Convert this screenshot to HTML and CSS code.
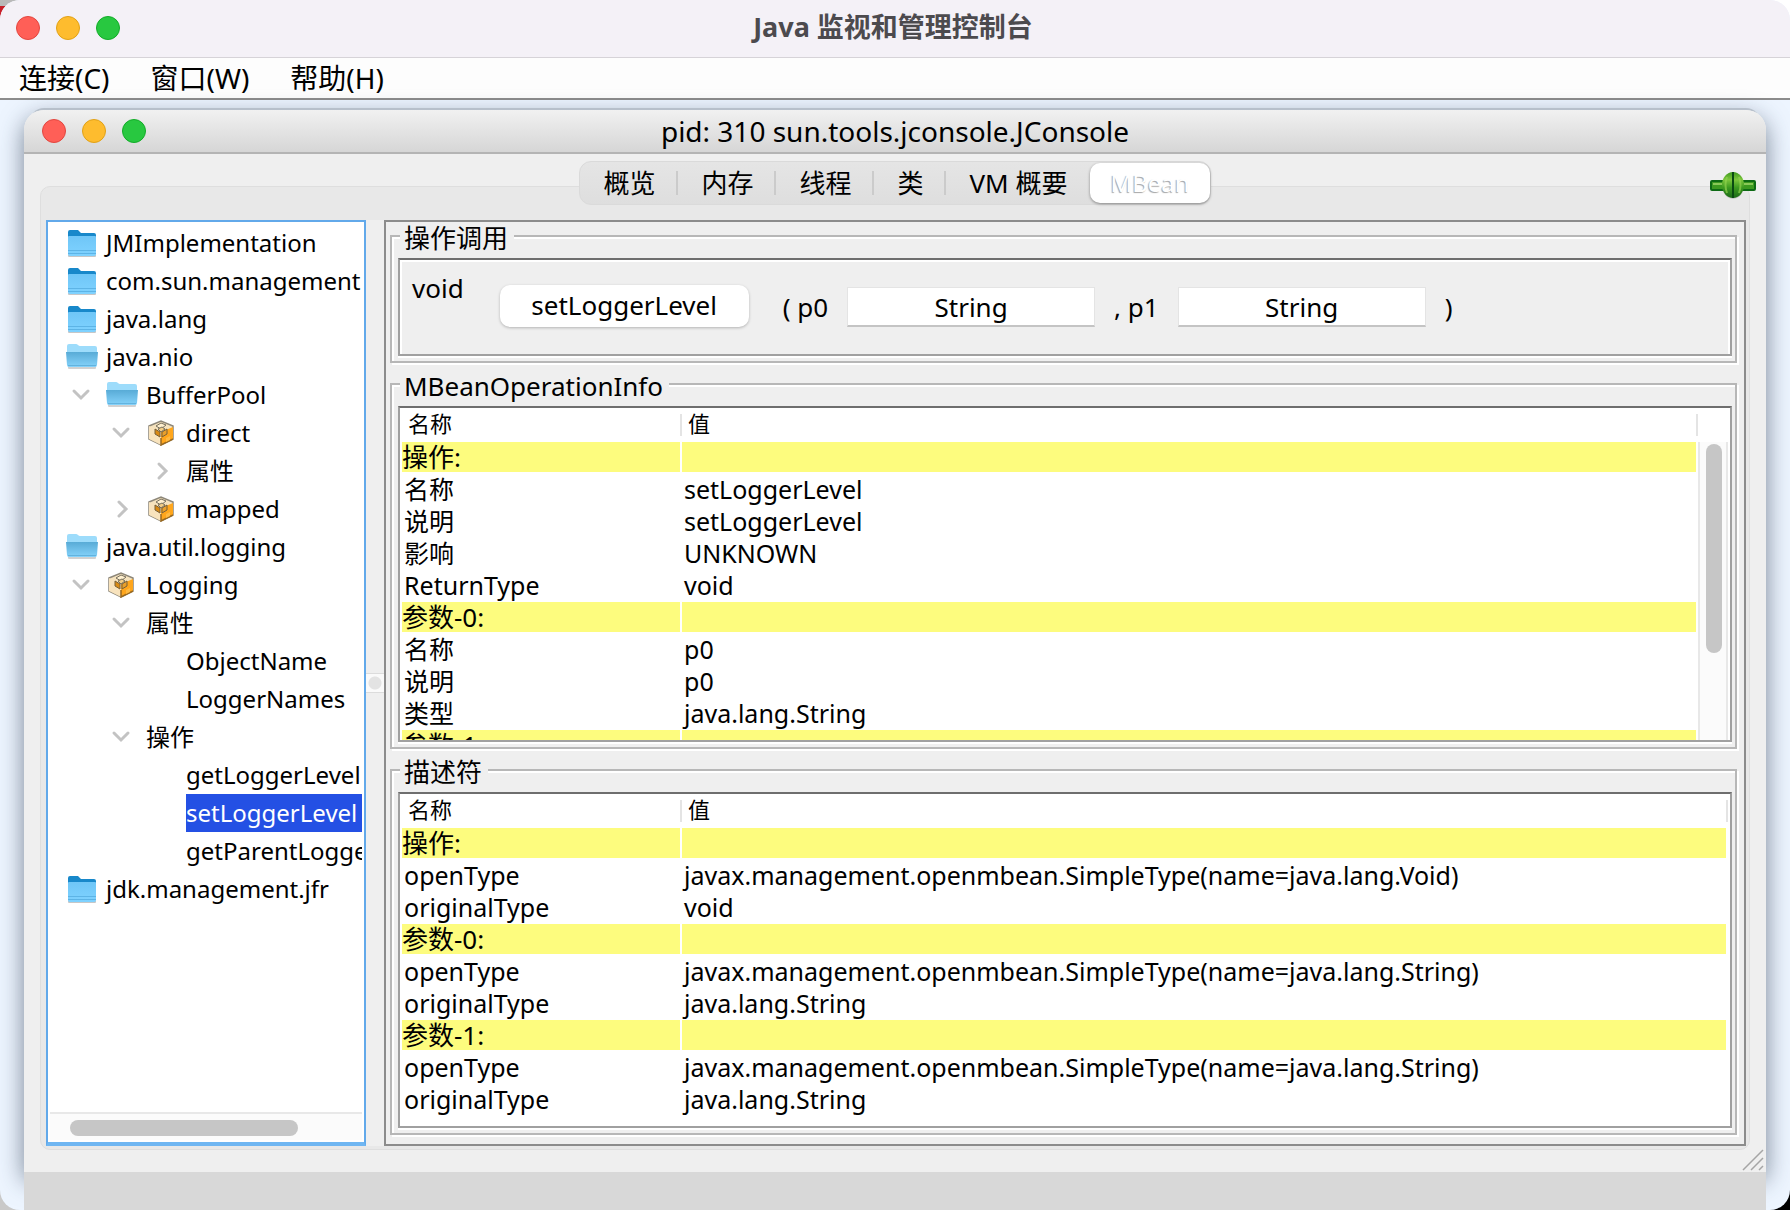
FILE: index.html
```html
<!DOCTYPE html>
<html lang="zh-CN">
<head>
    <meta charset="UTF-8">
    <meta name="viewport" content="width=device-width, initial-scale=1.0">
    <link rel="stylesheet" href="styles.css">
    <title>Java 监视和管理控制台</title>
</head>
<body>

<svg class="icon-defs" aria-hidden="true">
    <defs>
        <linearGradient id="closedFill" x1="0" y1="0" x2="0" y2="1">
            <stop offset="0" stop-color="#6fc6f7"/>
            <stop offset="1" stop-color="#7fd2ff"/>
        </linearGradient>
        <linearGradient id="openFill" x1="0" y1="0" x2="0" y2="1">
            <stop offset="0" stop-color="#58abd6"/>
            <stop offset="1" stop-color="#86d3fb"/>
        </linearGradient>
        <linearGradient id="plugFill" x1="0" y1="0" x2="0" y2="1">
            <stop offset="0" stop-color="#3f9a1e"/>
            <stop offset="0.3" stop-color="#7cc63c"/>
            <stop offset="0.6" stop-color="#3c9a20"/>
            <stop offset="1" stop-color="#1c6a18"/>
        </linearGradient>
    </defs>
    <symbol id="folder" viewBox="0 0 32 32">
        <rect x="2" y="27" width="28" height="3" rx="1" fill="#000" opacity="0.22"/>
        <path d="M2 5q0-2 2-2h8l3 3h13q2 0 2 2v5H2z" fill="#1888ca"/>
        <path d="M2 10q0-1 1-1h26q1 0 1 1v17q0 2-2 2H4q-2 0-2-2z" fill="url(#closedFill)"/>
        <path d="M2 23.500h28M2 26.500h28" stroke="#5db4e6" stroke-width="1"/>
    </symbol>
    <symbol id="folder-open" viewBox="0 0 32 32">
        <rect x="2" y="25" width="28" height="3" rx="1" fill="#000" opacity="0.18"/>
        <path d="M1 5q0-2 2-2h7q1 0 2 1t2 1h15q2 0 2 2v6H1z" fill="#9ddcfb"/>
        <path d="M0 11h32l-1 13q0 2-2 2H3q-2 0-2-2z" fill="url(#openFill)"/>
        <path d="M2 24.500h28" stroke="#63b3de" stroke-width="1"/>
    </symbol>
    <symbol id="mbean" viewBox="0 0 26 26">
        <path d="M1 6l12-5 12 5v13l-12 6-12-6z" fill="#f5e2bd" stroke="#8d8779" stroke-width="1.500"/>
        <path d="M13 12l12-5v12l-12 6z" fill="#ffa61c"/>
        <path d="M1 6l12 6v13L1 19z" fill="#f8e3bd"/>
        <path d="M13 18v7l12-6" stroke="#9a6a20" stroke-width="1.500" fill="none"/>
        <path d="M8 6l5-3 5 2-5 4z" fill="#fff0cf" stroke="#77705f" stroke-width="1"/>
        <path d="M7 9l5 3v5l-5-3z" fill="#d98a14" stroke="#77603a" stroke-width="1"/>
        <path d="M14 12l5-3v5l-5 3z" fill="#e9a02c" stroke="#77603a" stroke-width="1"/>
        <path d="M10 9l4-2 3 2-4 3z" fill="#f2cd86" stroke="#77705f" stroke-width="1"/>
        <path d="M18 18l4-2v4l-4 2z" fill="#ffb941"/>
    </symbol>
    <symbol id="chevron-down" viewBox="0 0 20 20">
        <path d="M3 6l7 7 7-7" fill="none" stroke="#c3c3c3" stroke-width="3" stroke-linecap="round"/>
    </symbol>
    <symbol id="chevron-right" viewBox="0 0 20 20">
        <path d="M8 3l7 7-7 7" fill="none" stroke="#c3c3c3" stroke-width="3" stroke-linecap="round"/>
    </symbol>
</svg>

<div class="window">
    <header class="titlebar">
        <div class="lights">
            <button class="light red" aria-label="关闭"></button>
            <button class="light yellow" aria-label="最小化"></button>
            <button class="light green" aria-label="缩放"></button>
        </div>
        <h1>Java 监视和管理控制台</h1>
    </header>

    <nav class="menubar">
        <button>连接(C)</button>
        <button>窗口(W)</button>
        <button>帮助(H)</button>
    </nav>

    <main class="desktop">
        <section class="frame">
            <header class="frame-title">
                <div class="lights">
                    <button class="light red" aria-label="关闭"></button>
                    <button class="light yellow" aria-label="最小化"></button>
                    <button class="light green" aria-label="缩放"></button>
                </div>
                <h2>pid: 310 sun.tools.jconsole.JConsole</h2>
            </header>

            <div class="tabs" role="tablist">
                <button class="tab" role="tab">概览</button>
                <button class="tab" role="tab">内存</button>
                <button class="tab" role="tab">线程</button>
                <button class="tab" role="tab">类</button>
                <button class="tab" role="tab">VM 概要</button>
                <button class="tab selected" role="tab" aria-selected="true">MBean</button>
            </div>

            <svg class="plug" viewBox="0 0 46 28">
                <ellipse cx="23" cy="17" rx="10" ry="10" fill="#000" opacity="0.15"/>
                <rect x="1" y="9" width="44" height="9" rx="1" fill="#3c9a20" stroke="#0d6a14" stroke-width="2"/>
                <path d="M3 12h9M34 12h9" stroke="#8ac858" stroke-width="2"/>
                <ellipse cx="23" cy="13" rx="11" ry="13" fill="url(#plugFill)"/>
                <path d="M17 5q-3 8 0 16M29 5q3 8 0 16" fill="none" stroke="#8fd14f" stroke-width="2" opacity="0.7"/>
                <path d="M23 0v26" stroke="#0a4a12" stroke-width="2"/>
            </svg>

            <div class="pane">
                <div class="tree-panel">
                    <ul class="tree">
                        <li><svg class="icon"><use href="#folder"/></svg><span>JMImplementation</span></li>
                        <li><svg class="icon"><use href="#folder"/></svg><span>com.sun.management</span></li>
                        <li><svg class="icon"><use href="#folder"/></svg><span>java.lang</span></li>
                        <li><svg class="icon"><use href="#folder-open"/></svg><span>java.nio</span></li>
                        <li><button class="twisty" aria-label="折叠"><svg><use href="#chevron-down"/></svg></button><svg class="icon"><use href="#folder-open"/></svg><span>BufferPool</span></li>
                        <li class="depth-2"><button class="twisty" aria-label="折叠"><svg><use href="#chevron-down"/></svg></button><svg class="icon bean"><use href="#mbean"/></svg><span>direct</span></li>
                        <li class="depth-3"><button class="twisty" aria-label="展开"><svg><use href="#chevron-right"/></svg></button><span>属性</span></li>
                        <li class="depth-2"><button class="twisty" aria-label="展开"><svg><use href="#chevron-right"/></svg></button><svg class="icon bean"><use href="#mbean"/></svg><span>mapped</span></li>
                        <li><svg class="icon"><use href="#folder-open"/></svg><span>java.util.logging</span></li>
                        <li><button class="twisty" aria-label="折叠"><svg><use href="#chevron-down"/></svg></button><svg class="icon bean"><use href="#mbean"/></svg><span>Logging</span></li>
                        <li class="depth-2"><button class="twisty" aria-label="折叠"><svg><use href="#chevron-down"/></svg></button><span>属性</span></li>
                        <li class="leaf"><span>ObjectName</span></li>
                        <li class="leaf"><span>LoggerNames</span></li>
                        <li class="depth-2"><button class="twisty" aria-label="折叠"><svg><use href="#chevron-down"/></svg></button><span>操作</span></li>
                        <li class="leaf"><span>getLoggerLevel</span></li>
                        <li class="leaf current"><span>setLoggerLevel</span></li>
                        <li class="leaf"><span>getParentLoggerName</span></li>
                        <li><svg class="icon"><use href="#folder"/></svg><span>jdk.management.jfr</span></li>
                    </ul>
                    <div class="hscroll"><div class="thumb"></div></div>
                </div>

                <div class="splitter"><div class="grip"></div></div>

                <div class="details">
                    <fieldset class="group">
                        <legend>操作调用</legend>
                        <form class="bevel operation">
                            <span class="return-type">void</span>
                            <div class="call">
                                <button type="button" class="invoke">setLoggerLevel</button>
                                <label for="p0" class="first">( p0</label>
                                <input id="p0" type="text" value="String">
                                <label for="p1">, p1</label>
                                <input id="p1" type="text" value="String">
                                <span>)</span>
                            </div>
                        </form>
                    </fieldset>

                    <fieldset class="group grow">
                        <legend>MBeanOperationInfo</legend>
                        <div class="bevel grid">
                            <div class="table-wrap">
                                <table>
                                    <thead>
                                        <tr><th class="name">名称</th><th>值</th></tr>
                                    </thead>
                                    <tbody>
                                        <tr class="section"><td>操作:</td><td></td></tr>
                                        <tr><td>名称</td><td>setLoggerLevel</td></tr>
                                        <tr><td>说明</td><td>setLoggerLevel</td></tr>
                                        <tr><td>影响</td><td>UNKNOWN</td></tr>
                                        <tr><td>ReturnType</td><td>void</td></tr>
                                        <tr class="section"><td>参数-0:</td><td></td></tr>
                                        <tr><td>名称</td><td>p0</td></tr>
                                        <tr><td>说明</td><td>p0</td></tr>
                                        <tr><td>类型</td><td>java.lang.String</td></tr>
                                        <tr class="section"><td>参数-1:</td><td></td></tr>
                                    </tbody>
                                </table>
                            </div>
                            <div class="vscroll"><div class="thumb"></div></div>
                        </div>
                    </fieldset>

                    <fieldset class="group grow">
                        <legend>描述符</legend>
                        <div class="bevel grid">
                            <div class="table-wrap">
                                <table>
                                    <thead>
                                        <tr><th class="name">名称</th><th>值</th></tr>
                                    </thead>
                                    <tbody>
                                        <tr class="section"><td>操作:</td><td></td></tr>
                                        <tr><td>openType</td><td>javax.management.openmbean.SimpleType(name=java.lang.Void)</td></tr>
                                        <tr><td>originalType</td><td>void</td></tr>
                                        <tr class="section"><td>参数-0:</td><td></td></tr>
                                        <tr><td>openType</td><td>javax.management.openmbean.SimpleType(name=java.lang.String)</td></tr>
                                        <tr><td>originalType</td><td>java.lang.String</td></tr>
                                        <tr class="section"><td>参数-1:</td><td></td></tr>
                                        <tr><td>openType</td><td>javax.management.openmbean.SimpleType(name=java.lang.String)</td></tr>
                                        <tr><td>originalType</td><td>java.lang.String</td></tr>
                                    </tbody>
                                </table>
                            </div>
                        </div>
                    </fieldset>
                </div>
            </div>

            <svg class="resize" viewBox="0 0 22 22">
                <path d="M1 21L21 1M9 21L21 9M17 21l4-4" stroke="#a5a5a5" stroke-width="1.500"/>
            </svg>
        </section>
        <div class="dock"></div>
    </main>
</div>

</body>
</html>
```
FILE: styles.css
```css
* {
    box-sizing: border-box;
}

body {
    margin: 0;
    font-family: "Noto Sans", "Noto Sans CJK SC", sans-serif;
    font-size: 25px;
    color: #000;
    background:
        linear-gradient(#b9b9b9 6px, #c8202a 6px) top left / 24px 24px no-repeat,
        linear-gradient(#c9c9c9, #c9c9c9) bottom left / 24px 24px no-repeat,
        linear-gradient(#fff, #fff) top right / 24px 24px no-repeat,
        #000;
}

button,
input {
    font: inherit;
    color: inherit;
    border: none;
    padding: 0;
}

button {
    background: none;
}

h1,
h2 {
    margin: 0;
}

.icon-defs {
    position: absolute;
    width: 0;
    height: 0;
}

.window {
    display: flex;
    flex-direction: column;
    height: 100vh;
    border-radius: 20px;
    overflow: hidden;
    background-color: #edf5ff;
}

/* title bars: lights on the left, caption centred in the whole bar */
.titlebar,
.frame-title {
    display: grid;
    grid-template-columns: 1fr auto 1fr;
    align-items: center;
}

.titlebar {
    height: 58px;
    padding: 0 20px 2px 16px;
    background-color: #f4f1f7;
    border-bottom: 1px solid #d6d3d8;
}

.titlebar h1 {
    padding-bottom: 2px;
    font-size: 27px;
    font-weight: bold;
    line-height: 36px;
    color: #4c4a4e;
}

.lights {
    display: flex;
    gap: 16px;
}

.light {
    width: 24px;
    height: 24px;
    border-radius: 50%;
}

.red {
    background-color: #ff5f57;
    border: 1px solid #e2463f;
}

.yellow {
    background-color: #febc2e;
    border: 1px solid #e1a116;
}

.green {
    background-color: #28c840;
    border: 1px solid #12ac28;
}

.menubar {
    display: flex;
    gap: 41px;
    height: 42px;
    padding: 0 19px;
    background-color: #fdfdfd;
    border-bottom: 2px solid #8c8c8c;
}

.menubar button {
    font-size: 28px;
    line-height: 40px;
}

.desktop {
    flex: 1;
    display: flex;
    flex-direction: column;
    min-height: 0;
    padding: 10px 24px 0;
}

.frame {
    position: relative;
    flex: 1;
    display: flex;
    flex-direction: column;
    min-height: 0;
    border-radius: 20px 20px 0 0;
    background-color: #efefef;
    box-shadow: 0 -8px 0 -6px #b7c0cb, 0 8px 24px rgba(40, 55, 75, 0.6);
}

.frame-title {
    height: 44px;
    padding: 0 18px;
    border-radius: 20px 20px 0 0;
    background: linear-gradient(#f1f1f1, #d6d6d6);
    border-bottom: 2px solid #b4b4b4;
}

.frame-title h2 {
    font-size: 28px;
    font-weight: normal;
    line-height: 42px;
}

/* covers the frame's shadow below its bottom edge */
.dock {
    position: relative;
    height: 38px;
    background-color: #d8d8d8;
}

/* the strip sits across the top edge of the pane */
.tabs {
    z-index: 1;
    align-self: center;
    display: flex;
    height: 44px;
    margin: 7px 0 -19px;
    border-radius: 12px;
    background: linear-gradient(#e5e5e5, #dedede);
    border: 1px solid #dadada;
}

.tab {
    padding: 0 23px;
    font-size: 26px;
    line-height: 40px;
    background: linear-gradient(#cbcbcb, #cbcbcb) right center / 2px 24px no-repeat;
}

.tab:nth-last-child(2) {
    background: none;
}

.tab.selected {
    margin: 1px 0;
    padding: 0 20px;
    font-size: 24px;
    color: #fff;
    background: #fff;
    border-radius: 10px;
    text-shadow: -1px 1px 1px #a5a5a5;
    box-shadow: 0 1px 3px rgba(0, 0, 0, 0.4);
}

.plug {
    position: absolute;
    z-index: 1;
    top: 62px;
    right: 10px;
    width: 46px;
    height: 28px;
}

.pane {
    flex: 1;
    display: flex;
    min-height: 0;
    margin: 0 16px 22px;
    padding: 33px 3px 3px 5px;
    background-color: #e8e8e8;
    border: 1px solid #dedede;
    border-radius: 10px;
}

.tree-panel {
    display: flex;
    flex-direction: column;
    width: 320px;
    padding: 2px;
    background-color: #fff;
    border: 2px solid #62a9ea;
    border-bottom: 4px solid #6fb6f2;
}

.tree {
    flex: 1;
    min-height: 0;
    margin: 0;
    padding: 0;
    overflow: hidden;
    list-style: none;
    font-size: 24px;
    line-height: 38px;
    white-space: nowrap;
}

.tree li {
    display: flex;
    align-items: center;
    height: 38px;
    padding-left: 16px;
}

.tree .depth-2 {
    padding-left: 56px;
}

.tree .depth-3 {
    padding-left: 96px;
}

.tree .leaf {
    padding-left: 136px;
}

.current span {
    flex: 1;
    color: #fff;
    background-color: #2450e4;
}

.icon {
    flex: none;
    width: 32px;
    height: 32px;
    margin-right: 8px;
}

.bean {
    width: 26px;
    height: 26px;
    margin: 0 12px 0 2px;
}

.twisty {
    flex: none;
    display: flex;
    width: 40px;
    padding-left: 5px;
}

.twisty svg {
    width: 20px;
    height: 20px;
}

.thumb {
    background-color: #c6c6c6;
    border-radius: 8px;
}

.hscroll {
    height: 28px;
    padding: 6px 20px 4px;
    background-color: #fbfbfb;
    border-top: 2px solid #e8e8e8;
}

.hscroll .thumb {
    width: 84%;
    height: 16px;
}

.splitter {
    display: flex;
    align-items: center;
    width: 18px;
    background-color: #efefef;
}

.grip {
    flex: 1;
    height: 20px;
    background: radial-gradient(circle, #e3e3e3 6px, #fafafa 7px);
    border: solid #dcdcdc;
    border-width: 1px 0;
}

.details {
    flex: 1;
    display: flex;
    flex-direction: column;
    gap: 7px;
    min-width: 0;
    padding: 0 7px 9px 4px;
    background-color: #efefef;
    border: 2px solid #8c8c8c;
}

.group {
    min-width: 0;
    min-height: 0;
    margin: 0;
    padding: 8px 3px 5px 6px;
    border: 2px solid #b7b7b7;
    box-shadow: inset 2px 2px 0 #fff, 2px 2px 0 #fff;
}

.group legend {
    height: 28px;
    margin-left: 2px;
    padding: 0 6px 0 4px;
    font-size: 26px;
    line-height: 32px;
    background-color: #efefef;
}

.grow {
    flex: 1;
    display: flex;
    flex-direction: column;
}

.bevel {
    border: 2px solid #a0a0a0;
    border-top-color: #6e6e6e;
    box-shadow: 0 2px 0 #fff;
}

.operation {
    display: flex;
    align-items: flex-start;
    padding: 14px 12px 27px;
    font-size: 26px;
    box-shadow: inset 2px 2px 0 #fff, inset -2px 0 0 #fff, 0 2px 0 #fff;
}

.return-type {
    margin-right: 36px;
    line-height: 28px;
}

.call {
    display: flex;
    align-items: flex-end;
    gap: 19px;
    padding-top: 11px;
    line-height: 40px;
}

.invoke {
    width: 249px;
    height: 42px;
    padding-bottom: 2px;
    background-color: #fff;
    border-radius: 10px;
    box-shadow: 0 1px 3px rgba(0, 0, 0, 0.25);
}

.first {
    margin-left: 15px;
}

.call input {
    width: 248px;
    height: 40px;
    text-align: center;
    background-color: #fff;
    border: 1px solid #e4e4e4;
    border-bottom: 2px solid #c4c4c4;
}

.grid {
    flex: 1;
    display: flex;
    min-height: 0;
    padding: 0 2px;
    background-color: #fff;
}

.table-wrap {
    flex: 1;
    min-width: 0;
    overflow: hidden;
}

table {
    width: 100%;
    border-collapse: separate;
    border-spacing: 0;
    table-layout: fixed;
}

th {
    height: 34px;
    padding: 0 6px;
    font-size: 22px;
    font-weight: normal;
    line-height: 30px;
    text-align: left;
    vertical-align: top;
    background: linear-gradient(#e4e4e4, #e4e4e4) right center / 2px 22px no-repeat;
}

.name {
    width: 280px;
}

td {
    height: 32px;
    padding: 0 2px;
    line-height: 30px;
    border: solid #fff;
    border-width: 0 2px 2px 0;
    white-space: nowrap;
}

.section td {
    padding: 0;
    font-size: 26px;
    background-color: #fdfc7e;
}

.vscroll {
    width: 30px;
    margin-top: 34px;
    padding: 2px 6px;
    background-color: #fbfbfb;
    border: solid #e8e8e8;
    border-width: 0 2px;
}

.vscroll .thumb {
    width: 16px;
    height: 71%;
}

.resize {
    position: absolute;
    right: 2px;
    bottom: 1px;
    width: 22px;
    height: 22px;
}
```
